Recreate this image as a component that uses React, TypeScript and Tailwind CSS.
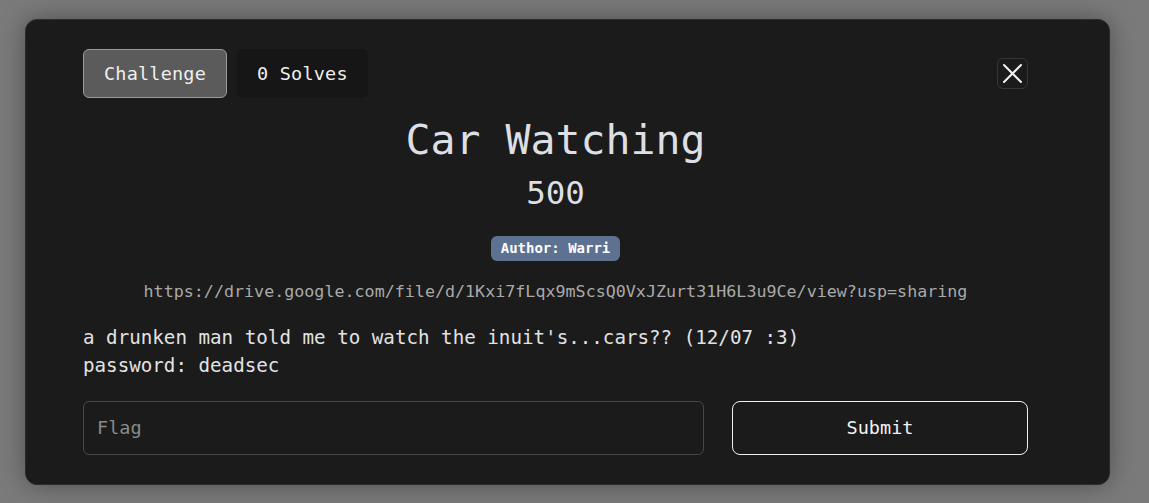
import React from "react";

const mono = { fontFamily: '"DejaVu Sans Mono", "Liberation Mono", monospace' };

export default function App() {
  return (
    <div
      className="w-[1149px] h-[503px] bg-[#7a7a7a] pt-[19px] pl-[25px] overflow-hidden"
      style={mono}
    >
      <div className="w-[1085px] h-[466px] bg-[#1b1b1b] rounded-[12px] border border-[#2c2c2c] shadow-[0_0_24px_rgba(0,0,0,0.35)] pl-[57px] pr-[81px] pt-[29px]">
        <div className="flex items-start justify-between">
          <div className="flex gap-[10px]">
            <div className="h-[49px] px-[20px] flex items-center rounded-[6px] bg-[#5b5b5b] border border-[#9a9a9a] text-[#f0f0f0] text-[18.5px] tracking-[0.2px]">
              Challenge
            </div>
            <div className="h-[49px] px-[20px] flex items-center rounded-[6px] bg-[#161616] text-[#f0f0f0] text-[18.5px] tracking-[0.2px]">
              0 Solves
            </div>
          </div>
          <div className="mt-[9px] w-[31px] h-[31px] rounded-[6px] border border-[#363636] flex items-center justify-center">
            <svg width="21" height="21" viewBox="0 0 21 21">
              <path d="M2 2 L19 19 M19 2 L2 19" stroke="#f2f2f2" strokeWidth="2" strokeLinecap="round" />
            </svg>
          </div>
        </div>

        <div className="mt-[17px] text-center text-[#dcdfe3] text-[41.5px] leading-[50px]">
          Car Watching
        </div>
        <div className="mt-[8px] text-center text-[#dcdfe3] text-[32.5px] leading-[40px]">
          500
        </div>
        <div className="mt-[23px] flex justify-center">
          <span className="h-[25px] px-[10px] rounded-[6px] bg-[#5d7191] text-white text-[14px] font-bold flex items-center">
            Author: Warri
          </span>
        </div>
        <div className="mt-[18px] text-center text-[#a9a9a9] text-[16.7px] leading-[25px]">
          https://drive.google.com/file/d/1Kxi7fLqx9mScsQ0VxJZurt31H6L3u9Ce/view?usp=sharing
        </div>
        <div className="mt-[20px] text-[#e2e2e2] text-[19.2px] leading-[28px]">
          <div>a drunken man told me to watch the inuit's...cars?? (12/07 :3)</div>
          <div>password: deadsec</div>
        </div>
        <div className="mt-[21px] flex gap-[28px]">
          <div className="w-[621px] h-[54px] rounded-[6px] border border-[#474747] flex items-center px-[13px] text-[#8a8a8a] text-[18.5px]">
            Flag
          </div>
          <div className="w-[296px] h-[54px] rounded-[8px] border border-[#f0f0f0] flex items-center justify-center text-[#f2f2f2] text-[18.5px]">
            Submit
          </div>
        </div>
      </div>
    </div>
  );
}
